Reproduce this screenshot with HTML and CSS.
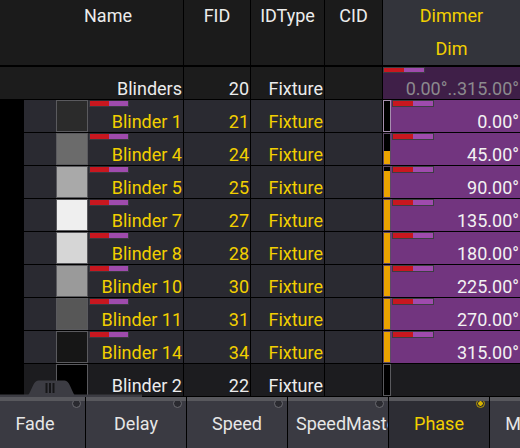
FILE: index.html
```
<!DOCTYPE html>
<html>
<head>
<meta charset="utf-8">
<link rel="stylesheet" href="styles.css">
</head>
<body>
<div class="screen">
  <div class="sheet">
    <div class="row head">
      <div class="hc name-h">Name</div>
      <div class="hc">FID</div>
      <div class="hc">IDType</div>
      <div class="hc">CID</div>
      <div class="hc dim-h"><span>Dimmer</span><span>Dim</span></div>
    </div>
    <div class="body">
      <div class="row group">
        <div class="cell txt">Blinders</div>
        <div class="cell txt">20</div>
        <div class="cell txt">Fixture</div>
        <div class="cell"></div>
        <div class="cell gdim"><div class="bar"></div><div class="v">0.00°..315.00°</div></div>
      </div>

      <div class="row fix">
        <div class="cell namec"><div class="sw" style="background:#2b2b2b"></div><div class="nm"><div class="bar"></div><div class="v">Blinder 1</div></div></div>
        <div class="cell txt">21</div>
        <div class="cell txt">Fixture</div>
        <div class="cell"></div>
        <div class="cell dimc"><div class="lvl sel"><div class="fill" style="height:0%"></div></div><div class="val"><div class="bar"></div><div class="v">0.00°</div></div></div>
      </div>

      <div class="row fix">
        <div class="cell namec"><div class="sw" style="background:#6b6b6b"></div><div class="nm"><div class="bar"></div><div class="v">Blinder 4</div></div></div>
        <div class="cell txt">24</div>
        <div class="cell txt">Fixture</div>
        <div class="cell"></div>
        <div class="cell dimc"><div class="lvl"><div class="fill" style="height:45%"></div></div><div class="val"><div class="bar"></div><div class="v">45.00°</div></div></div>
      </div>

      <div class="row fix">
        <div class="cell namec"><div class="sw" style="background:#a9a9a9"></div><div class="nm"><div class="bar"></div><div class="v">Blinder 5</div></div></div>
        <div class="cell txt">25</div>
        <div class="cell txt">Fixture</div>
        <div class="cell"></div>
        <div class="cell dimc"><div class="lvl"><div class="fill" style="height:87%"></div></div><div class="val"><div class="bar"></div><div class="v">90.00°</div></div></div>
      </div>

      <div class="row fix">
        <div class="cell namec"><div class="sw" style="background:#efefef"></div><div class="nm"><div class="bar"></div><div class="v">Blinder 7</div></div></div>
        <div class="cell txt">27</div>
        <div class="cell txt">Fixture</div>
        <div class="cell"></div>
        <div class="cell dimc"><div class="lvl"><div class="fill" style="height:100%"></div></div><div class="val"><div class="bar"></div><div class="v">135.00°</div></div></div>
      </div>

      <div class="row fix">
        <div class="cell namec"><div class="sw" style="background:#d6d6d6"></div><div class="nm"><div class="bar"></div><div class="v">Blinder 8</div></div></div>
        <div class="cell txt">28</div>
        <div class="cell txt">Fixture</div>
        <div class="cell"></div>
        <div class="cell dimc"><div class="lvl"><div class="fill" style="height:100%"></div></div><div class="val"><div class="bar"></div><div class="v">180.00°</div></div></div>
      </div>

      <div class="row fix">
        <div class="cell namec"><div class="sw" style="background:#9a9a9a"></div><div class="nm"><div class="bar"></div><div class="v">Blinder 10</div></div></div>
        <div class="cell txt">30</div>
        <div class="cell txt">Fixture</div>
        <div class="cell"></div>
        <div class="cell dimc"><div class="lvl"><div class="fill" style="height:100%"></div></div><div class="val"><div class="bar"></div><div class="v">225.00°</div></div></div>
      </div>

      <div class="row fix">
        <div class="cell namec"><div class="sw" style="background:#575757"></div><div class="nm"><div class="bar"></div><div class="v">Blinder 11</div></div></div>
        <div class="cell txt">31</div>
        <div class="cell txt">Fixture</div>
        <div class="cell"></div>
        <div class="cell dimc"><div class="lvl"><div class="fill" style="height:100%"></div></div><div class="val"><div class="bar"></div><div class="v">270.00°</div></div></div>
      </div>

      <div class="row fix">
        <div class="cell namec"><div class="sw" style="background:#161616"></div><div class="nm"><div class="bar"></div><div class="v">Blinder 14</div></div></div>
        <div class="cell txt">34</div>
        <div class="cell txt">Fixture</div>
        <div class="cell"></div>
        <div class="cell dimc"><div class="lvl"><div class="fill" style="height:100%"></div></div><div class="val"><div class="bar"></div><div class="v">315.00°</div></div></div>
      </div>

      <div class="row fix off">
        <div class="cell namec"><div class="sw" style="background:#000"></div><div class="nm"><div class="v">Blinder 2</div></div></div>
        <div class="cell txt">22</div>
        <div class="cell txt">Fixture</div>
        <div class="cell"></div>
        <div class="cell dimc"><div class="lvl"><div class="fill" style="height:0%"></div></div><div class="val"></div></div>
      </div>
    </div>
  </div>

  <div class="tab">
    <svg width="142" height="17" viewBox="0 0 142 17">
      <rect x="0" y="14.5" width="142" height="2.5" fill="#3c3c43"/>
      <path d="M25 17 C31 17 32 0.5 38.5 0.5 L64.5 0.5 C71 0.5 72 17 78 17 Z" fill="#3c3c43"/>
      <rect x="45.5" y="3" width="2" height="10" fill="#161618"/>
      <rect x="49" y="3" width="2" height="10" fill="#161618"/>
      <rect x="52.5" y="3" width="2" height="10" fill="#161618"/>
    </svg>
  </div>

  <div class="enc">
    <div class="btn"><span class="ring"></span><div class="lbl">Fade</div></div>
    <div class="btn"><span class="ring"></span><div class="lbl">Delay</div></div>
    <div class="btn"><span class="ring"></span><div class="lbl">Speed</div></div>
    <div class="btn"><span class="ring"></span><div class="lbl">SpeedMaster</div></div>
    <div class="btn on"><span class="ring"></span><div class="lbl">Phase</div></div>
    <div class="btn"><span class="ring"></span><div class="lbl">Measure</div></div>
  </div>
</div>
</body>
</html>
```
FILE: styles.css
```
html, body {
  margin: 0;
  padding: 0;
  background: #000;
}
.screen {
  position: relative;
  width: 520px;
  height: 448px;
  overflow: hidden;
  background: #000;
  font-family: Roboto, "Noto Sans", sans-serif;
  font-size: 18px;
  line-height: 20px;
  color: #ececec;
}
.row {
  display: grid;
  grid-template-columns: 183px 66px 73px 57px 137px;
  column-gap: 1px;
  background: #000;
}
.head {
  height: 65px;
  margin-bottom: 2px;
}
.hc {
  background: #1b1b1b;
  text-align: center;
  padding-top: 6px;
  white-space: nowrap;
}
.name-h {
  padding-left: 33px;
}
.dim-h {
  background: #33343b;
  color: #f2cf00;
  display: flex;
  flex-direction: column;
  align-items: center;
  gap: 13px;
}
.body {
  display: grid;
  grid-auto-rows: 32px;
  row-gap: 1px;
  background: #000;
}
.cell {
  background: #2a2a31;
  overflow: hidden;
  white-space: nowrap;
}
.group .cell {
  background: #1c1c1c;
}
.txt {
  display: flex;
  align-items: flex-end;
  justify-content: flex-end;
  padding-right: 1px;
}
.group .txt {
  color: #ececec;
}
.fix .txt {
  color: #f2cf00;
}
.v {
  margin-top: auto;
  text-align: right;
  padding-right: 1px;
}
.bar {
  width: 40px;
  height: 6px;
  box-sizing: border-box;
  border: 1px solid #3a3a40;
  border-top: 0;
  background: linear-gradient(to right, #c8171f 0, #c8171f 50%, #9f4bad 50%, #9f4bad 100%);
  flex: none;
}
.gdim {
  display: flex;
  flex-direction: column;
}
.group .gdim {
  background: #3f1f48;
  color: #8c8a8e;
}
.gdim .bar {
  width: 42px;
  height: 6px;
  border: 1px solid #3d3d44;
  margin-top: 0;
}
.namec {
  display: flex;
  border-left: 24px solid #000;
  padding-left: 32px;
}
.sw {
  width: 32px;
  flex: none;
  box-sizing: border-box;
  border: 1px solid #5a5a5e;
}
.nm {
  flex: 1;
  display: flex;
  flex-direction: column;
  color: #f2cf00;
}
.nm .bar {
  margin-left: 1px;
  margin-top: 1px;
}
.dimc {
  display: flex;
  background: #72357f;
}
.lvl {
  width: 8px;
  box-sizing: border-box;
  border: 1px solid #5e4a66;
  background: #000;
  display: flex;
  flex-direction: column;
  justify-content: flex-end;
  flex: none;
}
.lvl.sel {
  border-color: #a68fae;
}
.fill {
  background: #eba300;
}
.val {
  flex: 1;
  display: flex;
  flex-direction: column;
  color: #f2f2f2;
}
.val .bar {
  width: 42px;
  height: 7px;
  border: 1px solid #3d3d44;
  margin-left: 1px;
}
.off .cell,
.off .dimc {
  background: #1c1c1f;
}
.off .namec {
  background: #1c1c1f;
}
.off .txt,
.off .nm {
  color: #ececec;
}
.off .lvl {
  border-color: #5a5a5e;
}
.tab {
  position: absolute;
  left: 0;
  top: 380px;
  width: 142px;
  height: 17px;
}
.tab svg {
  display: block;
}
.enc {
  display: flex;
  gap: 1px;
  margin-top: 1px;
  margin-left: -15px;
  height: 51px;
}
.btn {
  position: relative;
  flex: none;
  width: 100px;
  box-sizing: border-box;
  border-top: 4px solid #58585d;
  background: #3a3a42;
  padding: 0 8px 2px;
  display: flex;
  align-items: center;
  overflow: hidden;
}
.lbl {
  width: 100%;
  text-align: center;
  white-space: nowrap;
  color: #e6e6e6;
}
.ring {
  position: absolute;
  top: -2px;
  right: 4px;
  width: 9px;
  height: 9px;
  box-sizing: border-box;
  border: 1.5px solid #6a6a70;
  border-radius: 50%;
  background: #2a2a30;
}
.btn.on {
  background: #2d2d34;
}
.btn.on .lbl {
  color: #f2cf00;
}
.btn.on .ring {
  border-color: #b89a00;
  background: radial-gradient(circle, #d8b400 0 2px, #2d2d34 2.5px);
}
```
